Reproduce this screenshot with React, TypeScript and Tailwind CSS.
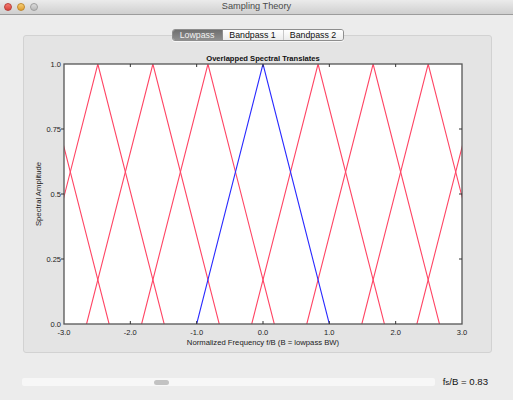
import React from "react";

const X0 = 40;
const X1 = 438;
const Y0 = 28;
const Y1 = 288;
const ratio = 0.83;

const fx = (f: number) => X0 + ((f + 3) / 6) * (X1 - X0);
const ay = (a: number) => Y1 - a * (Y1 - Y0);

const SpectrumChart = () => {
    const shifts = [-4, -3, -2, -1, 1, 2, 3, 4];
    const tri = (c: number) =>
        `${fx(c - 1)},${ay(0)} ${fx(c)},${ay(1)} ${fx(c + 1)},${ay(0)}`;
    const xTicks = [-3, -2, -1, 0, 1, 2, 3];
    const yTicks: [number, string][] = [
        [0, "0.0"],
        [0.25, "0.25"],
        [0.5, "0.5"],
        [0.75, "0.75"],
        [1, "1.0"],
    ];

    return (
        <svg width="467" height="316" className="block" style={{ fontFamily: '"Liberation Sans", Arial, sans-serif' }}>
            <defs>
                <clipPath id="plot">
                    <rect x={X0} y={Y0} width={X1 - X0} height={Y1 - Y0} />
                </clipPath>
            </defs>
            <text x={239} y={25} textAnchor="middle" fontSize="7.6" fontWeight="bold" fill="#111">
                Overlapped Spectral Translates
            </text>
            <rect x={X0} y={Y0} width={X1 - X0} height={Y1 - Y0} fill="#fff" />
            <g clipPath="url(#plot)" fill="none" strokeWidth="1.1">
                {shifts.map((k) => (
                    <polyline key={k} points={tri(k * ratio)} stroke="#ff4564" />
                ))}
                <polyline points={tri(0)} stroke="#2a2aff" />
            </g>
            <rect x={X0} y={Y0} width={X1 - X0} height={Y1 - Y0} fill="none" stroke="#555" strokeWidth="1.3" />
            {xTicks.map((t) => (
                <g key={t}>
                    {t > -3 && t < 3 && (
                        <>
                            <line x1={fx(t)} x2={fx(t)} y1={Y1} y2={Y1 - 3} stroke="#333" />
                            <line x1={fx(t)} x2={fx(t)} y1={Y0} y2={Y0 + 3} stroke="#333" />
                        </>
                    )}
                    <text x={fx(t)} y={299} textAnchor="middle" fontSize="7.5" fill="#222">
                        {t.toFixed(1)}
                    </text>
                </g>
            ))}
            {yTicks.map(([v, label]) => (
                <g key={label}>
                    {v > 0 && v < 1 && (
                        <>
                            <line x1={X0 - 3} x2={X0} y1={ay(v)} y2={ay(v)} stroke="#333" />
                            <line x1={X1 - 3} x2={X1} y1={ay(v)} y2={ay(v)} stroke="#333" />
                        </>
                    )}
                    <text x={X0 - 3} y={ay(v) + 2.5} textAnchor="end" fontSize="7.5" fill="#222">
                        {label}
                    </text>
                </g>
            ))}
            <text x={239} y={309} textAnchor="middle" fontSize="7.7" fill="#222">
                Normalized Frequency f/B (B = lowpass BW)
            </text>
            <text
                x={0}
                y={0}
                transform="translate(17,158) rotate(-90)"
                textAnchor="middle"
                fontSize="7.7"
                fill="#222"
            >
                Spectral Amplitude
            </text>
        </svg>
    );
};

const TrafficLight = ({ color, ring }: { color: string; ring: string }) => (
    <span className={`h-[8px] w-[8px] rounded-full border ${color} ${ring}`} />
);

export default function App() {
    return (
        <div
            className="flex h-[400px] w-[513px] flex-col overflow-hidden bg-[#ececec] text-[#111]"
            style={{ fontFamily: '"Liberation Sans", Arial, sans-serif' }}
        >
            <div className="relative flex h-[15px] shrink-0 items-center border-b border-[#9c9c9c] bg-gradient-to-b from-[#ebebeb] to-[#cfcfcf] px-[4px]">
                <div className="flex items-center gap-[5px]">
                    <TrafficLight color="bg-gradient-to-b from-[#f47a72] to-[#d9413b]" ring="border-[#b8403a]" />
                    <TrafficLight color="bg-gradient-to-b from-[#f6cf73] to-[#df9e2e]" ring="border-[#c0882e]" />
                    <TrafficLight color="bg-gradient-to-b from-[#dcdcdc] to-[#b8b8b8]" ring="border-[#9e9e9e]" />
                </div>
                <div className="absolute inset-0 flex items-center justify-center text-[9.2px] text-[#4a4a4a]">
                    Sampling Theory
                </div>
            </div>

            <div className="relative z-10 mt-[14px] flex justify-center pl-[2px]">
                <div className="flex h-[12px] overflow-hidden rounded-[3px] border border-[#8e8e8e] text-[8.8px] leading-none shadow-[0_1px_0_rgba(255,255,255,0.7)]">
                    <div className="flex w-[49px] items-center justify-center bg-gradient-to-b from-[#6f6f6f] to-[#8e8e8e] text-[#f2f2f2]">
                        Lowpass
                    </div>
                    <div className="flex w-[61px] items-center justify-center border-l border-[#8e8e8e] bg-gradient-to-b from-[#ffffff] to-[#ececec]">
                        Bandpass 1
                    </div>
                    <div className="flex w-[60px] items-center justify-center border-l border-[#c8c8c8] bg-gradient-to-b from-[#ffffff] to-[#ececec]">
                        Bandpass 2
                    </div>
                </div>
            </div>

            <div className="-mt-[6px] ml-[23px] mr-[21px] h-[318px] rounded-[3px] border border-[#d2d2d2] bg-[#e4e4e4]">
                <SpectrumChart />
            </div>

            <div className="mt-[22px] flex items-center pl-[22px] pr-[25px]">
                <div className="flex h-[8px] w-[413px] items-center rounded-[2px] bg-[#f7f7f7] pl-[132px]">
                    <div className="h-[5px] w-[15px] rounded-full bg-[#c2c2c2]" />
                </div>
                <div className="ml-auto text-[9.6px] text-[#111]">
                    f<span className="text-[8px]">s</span>/B = 0.83
                </div>
            </div>
        </div>
    );
}
